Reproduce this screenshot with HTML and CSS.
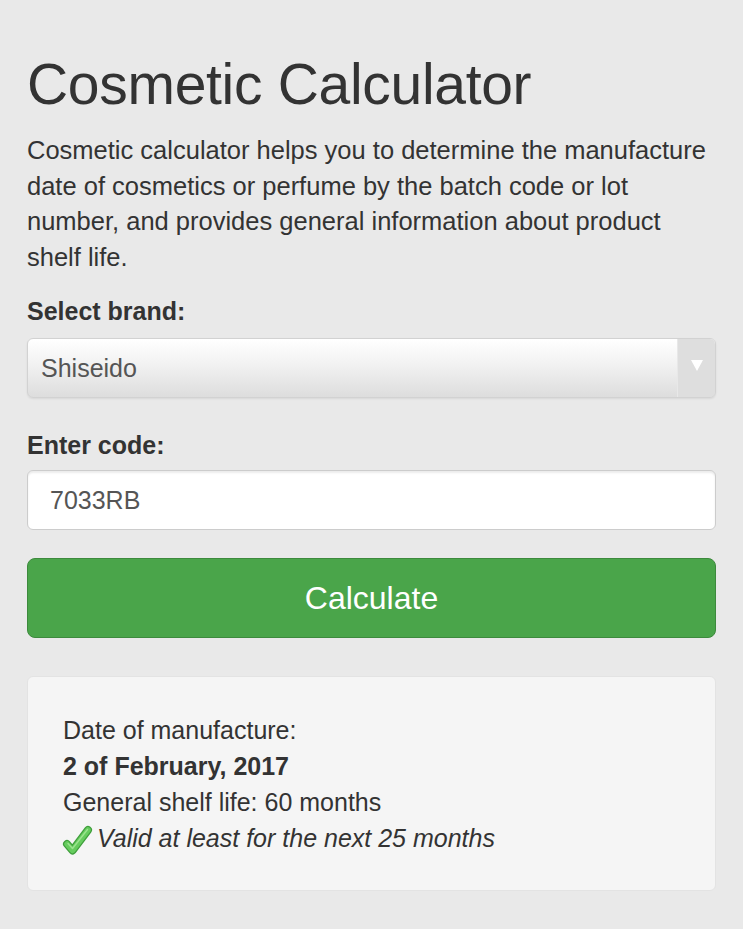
FILE: index.html
```html
<!DOCTYPE html>
<html>

<head>
  <meta charset="utf-8" />
  <meta name="viewport" content="width=device-width, initial-scale=1.0">
  <title>Cosmetic Calculator</title>
  <link rel="stylesheet" href="styles.css">
</head>

<body>
  <div class="page">
    <h1 class="title">Cosmetic Calculator</h1>
    <p class="intro">Cosmetic calculator helps you to determine the manufacture date of cosmetics or perfume by the batch code or lot number, and provides general information about product shelf life.</p>

    <label class="field-label brand-label" for="brand">Select brand:</label>
    <div class="select-box">
      <span class="select-value" id="brand">Shiseido</span>
      <span class="select-arrow"></span>
    </div>

    <label class="field-label code-label" for="code">Enter code:</label>
    <input class="code-input" id="code" type="text" value="7033RB">

    <a class="calc-button">Calculate</a>

    <div class="result">
      <div>Date of manufacture:</div>
      <div class="result-date">2 of February, 2017</div>
      <div>General shelf life: 60 months</div>
      <div class="result-valid">
        <svg class="check" width="31" height="31" viewBox="0 0 31 31">
          <polyline points="5,19 10.5,25.5 26,5" fill="none" stroke="#3f9e3c" stroke-width="8"
            stroke-linecap="round" stroke-linejoin="round" />
          <polyline points="5,19 10.5,25.5 26,5" fill="none" stroke="#66cc5e" stroke-width="5.5"
            stroke-linecap="round" stroke-linejoin="round" />
          <polyline points="6,18.5 10.5,23.5 25.5,4.5" fill="none" stroke="#9be38e" stroke-width="1.5"
            stroke-linecap="round" stroke-linejoin="round" />
        </svg>
        <em>Valid at least for the next 25 months</em>
      </div>
    </div>
  </div>
</body>

</html>
```

FILE: styles.css
```css
body {
  margin: 0;
  padding: 0;
  background-color: #e9e9e9;
  color: #333333;
  font-family: "Liberation Sans", Arial, sans-serif;
}

.page {
  display: flex;
  flex-direction: column;
  padding: 48px 27px 40px 27px;
}

.title {
  margin: 0;
  font-size: 57px;
  font-weight: normal;
  line-height: 72px;
  letter-spacing: -0.3px;
}

.intro {
  margin: 13px 0 0 0;
  font-size: 25.5px;
  line-height: 35.5px;
}

.field-label {
  font-size: 25px;
  font-weight: bold;
  line-height: 32px;
}

.brand-label {
  margin-top: 20px;
  margin-bottom: 11px;
}

.code-label {
  margin-top: 31px;
  margin-bottom: 9px;
}

.select-box {
  display: flex;
  height: 58px;
  border: 1px solid #d2d2d2;
  border-radius: 6px;
  overflow: hidden;
  background: linear-gradient(to bottom, #ffffff 0%, #f3f3f3 40%, #dddddd 100%);
  box-shadow: 0 1px 2px rgba(0, 0, 0, 0.08);
}

.select-value {
  flex: 1;
  display: flex;
  align-items: center;
  padding-left: 13px;
  font-size: 25px;
  color: #555555;
}

.select-arrow {
  width: 37px;
  display: flex;
  align-items: center;
  justify-content: center;
  background-color: #dedede;
  border-left: 1px solid #e8e8e8;
}

.select-arrow::after {
  content: "";
  border-left: 6px solid transparent;
  border-right: 6px solid transparent;
  border-top: 11px solid #ffffff;
  margin-bottom: 6px;
}

.code-input {
  box-sizing: border-box;
  height: 60px;
  width: 100%;
  padding: 0 22px;
  margin: 0;
  border: 1px solid #cccccc;
  border-radius: 6px;
  background-color: #ffffff;
  box-shadow: inset 0 2px 2px rgba(0, 0, 0, 0.08);
  font-family: "Liberation Sans", Arial, sans-serif;
  font-size: 25px;
  color: #555555;
  outline: none;
}

.calc-button {
  margin-top: 28px;
  height: 78px;
  display: flex;
  align-items: center;
  justify-content: center;
  border: 1px solid #3d8a3d;
  border-radius: 8px;
  background-color: #4aa54a;
  color: #ffffff;
  font-size: 32px;
  text-decoration: none;
  user-select: none;
}

.result {
  margin-top: 38px;
  padding: 35px 35px 34px 35px;
  border: 1px solid #e3e3e3;
  border-radius: 6px;
  background-color: #f5f5f5;
  font-size: 25px;
  line-height: 36px;
}

.result-date {
  font-weight: bold;
}

.result-valid {
  display: flex;
  align-items: center;
  gap: 4px;
}

.check {
  flex-shrink: 0;
  margin-left: -1px;
  margin-top: 4px;
}
```
